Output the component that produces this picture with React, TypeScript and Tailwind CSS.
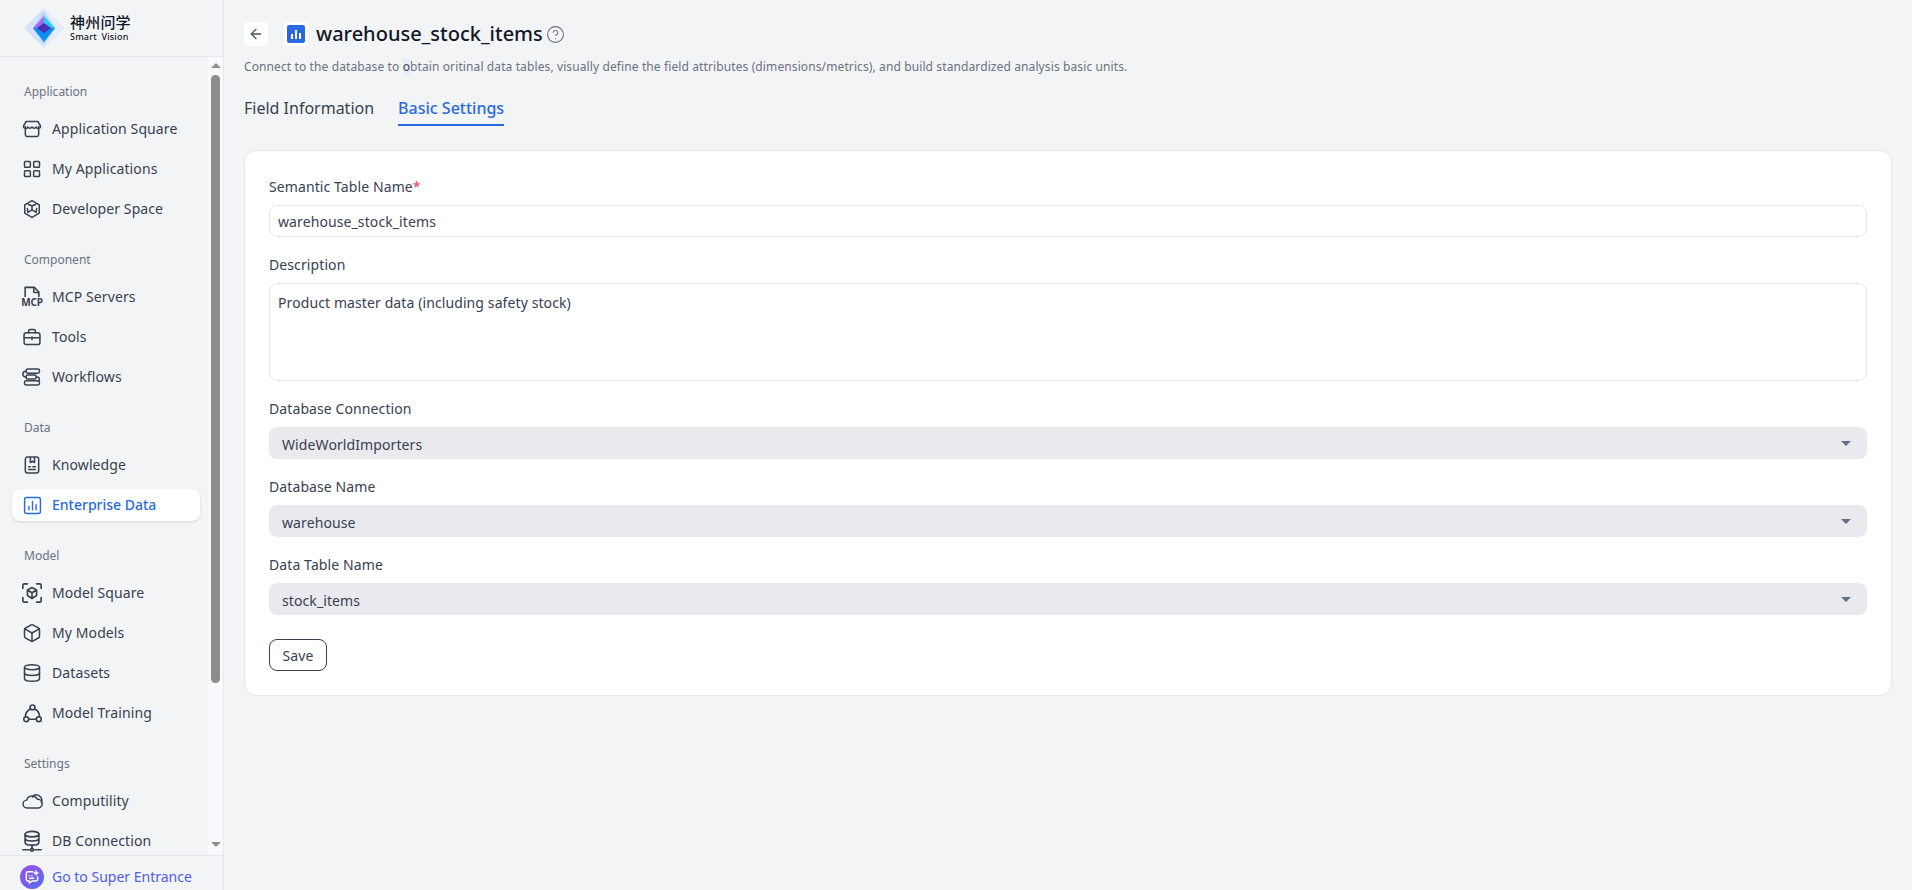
import { ArrowLeft, LayoutGrid, Box, Database, CircleHelp } from "lucide-react";
import type { ReactNode } from "react";

const Svg = (props: { children: ReactNode; className?: string }) => (
  <svg
    viewBox="0 0 24 24"
    fill="none"
    stroke="currentColor"
    strokeWidth="1.8"
    strokeLinecap="round"
    strokeLinejoin="round"
    className={props.className ?? "h-5 w-5"}
  >
    {props.children}
  </svg>
);

const StoreIcon = () => (
  <Svg>
    <path d="M4 9v10a2 2 0 0 0 2 2h12a2 2 0 0 0 2-2V9" />
    <path d="M5 3h14l3 5a2.5 2.5 0 0 1-5 1.5 2.8 2.8 0 0 1-5 0 2.8 2.8 0 0 1-5 0A2.5 2.5 0 0 1 2 8z" />
  </Svg>
);

const DevIcon = () => (
  <Svg>
    <path d="M12 2l8.7 5v10L12 22l-8.7-5V7z" />
    <path d="M12 8v5l-5 3M12 13l5 3M7.5 6.5L12 8l4.5-1.5M7 16l-.5-4.5M17 16l.5-4.5" />
  </Svg>
);

const McpIcon = () => (
  <span className="relative flex h-[22px] w-[22px] flex-col items-center">
    <svg viewBox="0 0 22 12" fill="none" stroke="currentColor" strokeWidth="1.7" className="h-[11px] w-[22px]">
      <path d="M3.5 12V1.5h10l5 5V12" strokeLinejoin="round" />
      <path d="M13 1.5V7h5.5" strokeLinejoin="round" />
    </svg>
    <span className="text-[10px] font-bold leading-[10px] tracking-tight">MCP</span>
  </span>
);

const ToolsIcon = () => (
  <Svg>
    <rect x="2.5" y="7" width="19" height="14" rx="2.5" />
    <path d="M8 7V4.5A1.5 1.5 0 0 1 9.5 3h5A1.5 1.5 0 0 1 16 4.5V7M2.5 13h19M12 12v3" />
  </Svg>
);

const WorkflowIcon = () => (
  <Svg>
    <rect x="5" y="2.5" width="16" height="5" rx="2" />
    <rect x="5" y="9.5" width="12" height="5" rx="2" />
    <rect x="3" y="16.5" width="18" height="5" rx="2" />
    <path d="M5 5H4.5a2.3 2.3 0 0 0 0 7H5M17 12h2a2.3 2.3 0 0 1 0 4.5" />
  </Svg>
);

const KnowledgeIcon = () => (
  <Svg>
    <rect x="4" y="2.5" width="16" height="19" rx="2.5" />
    <path d="M10 3v6l2.500-1.500L15 9V3M8 14h2M8 17.500h8M13 14h3" />
  </Svg>
);

const EnterpriseIcon = () => (
  <Svg className="h-[19px] w-[19px]">
    <rect x="2" y="2" width="20" height="20" rx="2.500" />
    <path d="M7.500 13v4.500M12 7v10.500M16.500 11v6.500" />
  </Svg>
);

const ScanIcon = () => (
  <Svg className="h-[22px] w-[22px]">
    <path d="M2 7V3.500A1.500 1.500 0 0 1 3.500 2H7M17 2h3.500A1.500 1.500 0 0 1 22 3.500V7M22 17v3.500a1.500 1.500 0 0 1-1.500 1.500H17M7 22H3.500A1.500 1.500 0 0 1 2 20.500V17" />
    <path d="M12 6l5 2.800v6L12 18l-5-3.200v-6zM7 8.800l5 3 5-3M12 11.800V18" />
  </Svg>
);

const TrainingIcon = () => (
  <Svg className="h-[21px] w-[21px]">
    <circle cx="12" cy="5" r="2.800" />
    <circle cx="4.800" cy="18.500" r="2.800" />
    <circle cx="19.200" cy="18.500" r="2.800" />
    <path d="M9.700 6.500C6 8.500 3.800 12 3.900 15.800M14.300 6.500C18 8.500 20.200 12 20.100 15.800M7.600 18.500h8.800" />
  </Svg>
);

const CloudIcon = () => (
  <svg viewBox="0 0 24 20" fill="none" stroke="currentColor" strokeWidth="1.700" strokeLinecap="round" strokeLinejoin="round" className="h-[18px] w-[21px]">
    <path d="M6 18a4.500 4.500 0 0 1-.6-9A6.500 6.500 0 0 1 17.500 8a5 5 0 0 1 1 10z" />
    <path d="M12 5.500a5 5 0 0 1 8-1 5 5 0 0 1 2 7" />
  </svg>
);

const DbLinkIcon = () => (
  <Svg className="h-[22px] w-[22px]">
    <ellipse cx="12" cy="4.500" rx="7.500" ry="3" />
    <path d="M4.500 4.500v9c0 1.700 3.400 3 7.500 3s7.500-1.300 7.500-3v-9M4.500 9c0 1.700 3.400 3 7.500 3s7.500-1.300 7.500-3" />
    <path d="M12 16.500V20M2 21.500h7M15 21.500h7" />
    <circle cx="12" cy="21.500" r="1.500" />
  </Svg>
);

const groups = [
  {
    title: "Application",
    items: [
      { label: "Application Square", icon: <StoreIcon /> },
      { label: "My Applications", icon: <LayoutGrid size={20} strokeWidth={1.8} /> },
      { label: "Developer Space", icon: <DevIcon /> },
    ],
  },
  {
    title: "Component",
    items: [
      { label: "MCP Servers", icon: <McpIcon /> },
      { label: "Tools", icon: <ToolsIcon /> },
      { label: "Workflows", icon: <WorkflowIcon /> },
    ],
  },
  {
    title: "Data",
    items: [
      { label: "Knowledge", icon: <KnowledgeIcon /> },
      { label: "Enterprise Data", icon: <EnterpriseIcon />, active: true },
    ],
  },
  {
    title: "Model",
    items: [
      { label: "Model Square", icon: <ScanIcon /> },
      { label: "My Models", icon: <Box size={20} strokeWidth={1.8} /> },
      { label: "Datasets", icon: <Database size={20} strokeWidth={1.8} /> },
      { label: "Model Training", icon: <TrainingIcon /> },
    ],
  },
  {
    title: "Settings",
    items: [
      { label: "Computility", icon: <CloudIcon /> },
      { label: "DB Connection", icon: <DbLinkIcon /> },
    ],
  },
];

const Logo = () => (
  <svg viewBox="0 0 40 40" className="h-10 w-10">
    <path d="M20 0l20 20-20 20L0 20z" fill="#d5e2fd" />
    <path d="M20 0l20 20-20 20z" fill="#e4edfe" />
    <path d="M20 3L9 20l11 17 11-17z" fill="#bcd4fd" />
    <path d="M20 8l11 12H20z" fill="#22d3ee" />
    <path d="M20 8L9 20h11z" fill="#a06cf0" />
    <path d="M9 20h22L20 34z" fill="#0b8cf0" />
    <path d="M13 20l7-5 7 5-7 5z" fill="#4c2fb5" />
  </svg>
);

const Sidebar = () => (
  <aside className="flex h-full w-[224px] shrink-0 flex-col border-r border-[#e5e7eb] bg-[#f3f4f6]">
    <div className="flex h-[57px] shrink-0 items-center gap-1.5 border-b border-[#e5e7eb] pb-[1px] pl-6">
      <Logo />
      <div className="flex flex-col text-[#111827]">
        <span className="text-[15px] leading-[16px] font-medium tracking-[0.2px] font-['Noto_Sans_CJK_SC',sans-serif]">
          神州问学
        </span>
        <span className="mt-[2px] text-[9px] leading-[10px] font-medium tracking-[0.2px] [word-spacing:2px]">Smart Vision</span>
      </div>
    </div>
    <div className="flex min-h-0 flex-1">
      <nav className="flex min-w-0 flex-1 flex-col gap-6 overflow-hidden pt-6 pr-2 pl-3">
        {groups.map((g) => (
          <div key={g.title} className="shrink-0">
            <div className="mb-[10px] h-[22px] pl-3 text-xs leading-[22px] text-[#6b7280]">{g.title}</div>
            <div className="flex flex-col gap-2">
              {g.items.map((item: any) => (
                <div
                  key={item.label}
                  className={
                    item.active
                      ? "flex h-8 items-center gap-[9px] rounded-lg bg-white pl-[9px] text-sm font-medium text-[#2a6ae0] shadow-sm"
                      : "flex h-8 items-center gap-[9px] pl-[9px] text-sm tracking-[0.1px] text-[#374151]"
                  }
                >
                  <span className="flex h-[22px] w-[22px] shrink-0 items-center justify-center">{item.icon}</span>
                  {item.label}
                </div>
              ))}
            </div>
          </div>
        ))}
      </nav>
      <div className="relative w-[15px] shrink-0 bg-[#f8f9fa]">
        <div className="absolute top-[6px] left-[2.5px] h-0 w-0 border-x-[5px] border-b-[5px] border-x-transparent border-b-[#8f8f8f]" />
        <div className="absolute top-[18px] left-[3px] h-[608px] w-[9px] rounded-full bg-[#8c8c8c]" />
        <div className="absolute bottom-[8px] left-[2.5px] h-0 w-0 border-x-[5px] border-t-[5px] border-x-transparent border-t-[#8f8f8f]" />
      </div>
    </div>
    <div className="flex h-[35px] shrink-0 items-center gap-[8px] border-t border-[#e5e7eb] pt-2 pl-5 text-sm text-[#4f5ee8]">
      <span className="flex h-6 w-6 items-center justify-center rounded-full bg-gradient-to-br from-[#9a4bea] to-[#4f6ef0] text-white">
        <svg viewBox="0 0 24 24" fill="none" stroke="currentColor" strokeWidth="2.200" strokeLinecap="round" strokeLinejoin="round" className="h-4 w-4">
          <path d="M13 4H6a2.500 2.500 0 0 0-2.500 2.500v9A2.500 2.500 0 0 0 6 18h2v3l4-3h6a2.500 2.500 0 0 0 2.500-2.500V12" />
          <path d="M8 10h.01M12 10h.01M8.500 14h6M18 3v6M15 6h6" />
        </svg>
      </span>
      Go to Super Entrance
    </div>
  </aside>
);

const Label = (props: { children: ReactNode }) => (
  <div className="mb-2 h-[22px] pt-[1px] text-sm leading-[22px] tracking-[0.1px] text-[#374151]">{props.children}</div>
);

const SelectField = (props: { label: string; value: string }) => (
  <div className="mb-4">
    <Label>{props.label}</Label>
    <div className="flex h-8 items-center justify-between rounded-lg bg-[#e9e9ee] pr-[16px] pl-[13px] text-sm tracking-[0.1px] text-[#374151]">
      <span className="pt-[3px]">{props.value}</span>
      <span className="h-0 w-0 border-x-[5px] border-t-[5px] border-x-transparent border-t-[#667085]" />
    </div>
  </div>
);

export default function App() {
  return (
    <div className="flex h-[890px] w-full overflow-hidden bg-[#f3f4f6] font-['Noto_Sans','Noto_Sans_CJK_SC',sans-serif]">
      <Sidebar />
      <main className="min-w-0 flex-1 px-5 pt-[22px]">
        <div className="flex h-6 items-center">
          <span className="flex h-6 w-6 items-center justify-center rounded bg-white text-[#4b5563]">
            <ArrowLeft size={16} strokeWidth={2} />
          </span>
          <span className="ml-4 flex h-6 w-6 items-center justify-center rounded bg-white">
            <span className="flex h-[18px] w-[18px] items-end justify-center gap-[2px] rounded-[2px] bg-[#2a6ae0] pb-1">
              <span className="h-[5px] w-[2px] bg-white" />
              <span className="h-[9px] w-[2px] bg-white" />
              <span className="h-[6px] w-[2px] bg-white" />
            </span>
          </span>
          <h1 className="ml-2 text-xl font-medium text-[#111827]">warehouse_stock_items</h1>
          <CircleHelp size={19} strokeWidth={1.4} className="ml-[3px] text-[#6b7280]" />
        </div>
        <p className="mt-[11px] h-5 text-xs leading-5 tracking-[0.11px] text-[#6b7280]">
          Connect to the database to <span className="bg-[#e8edfb] text-[#374151]">o</span>btain oritinal data tables, visually define the field attributes (dimensions/metrics), and build standardized analysis basic units.
        </p>
        <div className="mt-3 flex h-[37px] gap-6 text-base">
          <div className="pt-[7px] text-[#374151]">Field Information</div>
          <div className="h-[37px] border-b-2 border-[#2a6ae0] pt-[7px] font-medium text-[#2a6ae0]">Basic Settings</div>
        </div>
        <section className="mt-6 rounded-xl border border-[#e5e7eb] bg-white p-6">
          <Label>
            Semantic Table Name<span className="text-[#ef4444]">*</span>
          </Label>
          <div className="mb-4 flex h-8 items-center rounded-lg border border-[#e5e7eb] px-2 pt-[2px] text-sm tracking-[0.1px] text-[#374151]">
            warehouse_stock_items
          </div>
          <Label>Description</Label>
          <div className="mb-4 h-[98px] rounded-lg border border-[#e5e7eb] px-2 pt-[8px] text-sm leading-[22px] tracking-[0.1px] text-[#374151]">
            Product master data (including safety stock)
          </div>
          <SelectField label="Database Connection" value="WideWorldImporters" />
          <SelectField label="Database Name" value="warehouse" />
          <SelectField label="Data Table Name" value="stock_items" />
          <button className="mt-6 block h-8 w-[58px] rounded-lg border border-[#374151] bg-white pt-[1px] text-sm tracking-[0.1px] text-[#374151]">Save</button>
        </section>
      </main>
    </div>
  );
}
